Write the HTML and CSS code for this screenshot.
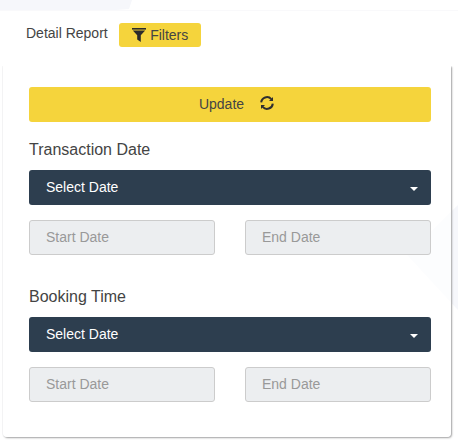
FILE: index.html
```html
<!DOCTYPE html>
<html lang="en">
<head>
  <meta charset="UTF-8" />
  <meta name="viewport" content="width=device-width, initial-scale=1.0"/>
  <title>Detail Report</title>
  <link rel="stylesheet" href="styles.css">
</head>
<body>

  <svg class="bg-shape" width="458" height="447" viewBox="0 0 458 447">
    <polygon points="0,0 132,0 129,9 50,15 0,33" fill="#f6f7fb"/>
    <polygon points="458,205 407,255 458,310" fill="#f6f7fb"/>
  </svg>

  <div class="tabs">
    <span class="tab-title">Detail Report</span>
    <button type="button" class="filter-btn">
      <svg width="14" height="14" viewBox="0 0 14 14" fill="#2b2b2b">
        <path d="M0 0h14v1.6H0z"/>
        <path d="M.8 2.4h12.4L8.8 7.2V14L5.2 11.6V7.2z"/>
      </svg>
      Filters
    </button>
  </div>

  <div class="panel">
    <button type="button" class="update-btn">
      <span class="btn-text">Update</span>
      <svg width="16" height="16" viewBox="0 0 16 16" fill="none" stroke="#2f2f2f" stroke-width="2">
        <path d="M2.2 7.4A5.8 5.8 0 0 1 12.3 4.1"/>
        <path d="M13.8 8.6A5.8 5.8 0 0 1 3.7 11.9"/>
        <path d="M14 2v4h-4z" fill="#2f2f2f" stroke="none"/>
        <path d="M2 14v-4h4z" fill="#2f2f2f" stroke="none"/>
      </svg>
    </button>

    <div class="group">
      <label>Transaction Date</label>
      <div class="select-bar"><span class="btn-text">Select Date</span> <span class="caret"></span></div>
      <div class="date-row">
        <input type="text" placeholder="Start Date" disabled />
        <input type="text" placeholder="End Date" disabled />
      </div>
    </div>

    <div class="group">
      <label>Booking Time</label>
      <div class="select-bar"><span class="btn-text">Select Date</span> <span class="caret"></span></div>
      <div class="date-row">
        <input type="text" placeholder="Start Date" disabled />
        <input type="text" placeholder="End Date" disabled />
      </div>
    </div>
  </div>

</body>
</html>
```

FILE: styles.css
```css
* {
  box-sizing: border-box;
}

body {
  margin: 0;
  padding-top: 10px;
  font-family: "Liberation Sans", Arial, sans-serif;
  background: #fff;
  color: #444;
  position: relative;
  height: 447px;
  overflow: hidden;
}

.bg-shape {
  position: absolute;
  left: 0;
  top: 0;
}

.tabs {
  position: relative;
  z-index: 1;
  height: 56px;
  padding: 12px 0 0 26px;
  border-top: 1px solid #f9f9fb;
  background: #fff;
  display: flex;
  align-items: flex-start;
  gap: 11px;
}

.tab-title {
  margin-top: 1px;
  font-size: 14px;
  line-height: 18px;
}

.filter-btn {
  width: 82px;
  height: 24px;
  padding: 0 0 0 1px;
  border: none;
  border-radius: 3px;
  background: #f5d43c;
  color: #444;
  font-family: inherit;
  font-size: 14px;
  display: flex;
  align-items: center;
  justify-content: center;
  gap: 4px;
}

.panel {
  position: relative;
  width: 448px;
  height: 371px;
  margin-left: 3px;
  padding: 21px 20px 0 26px;
  border-radius: 0 0 4px 4px;
  background: rgba(255, 255, 255, 0.7);
  box-shadow: 1px 1px 2px rgba(0, 0, 0, 0.35), 0 0 0 1px #f7f7f8;
}

.update-btn {
  width: 402px;
  height: 35px;
  padding: 0 0 0 14px;
  border: none;
  border-radius: 3px;
  background: #f5d43c;
  color: #444;
  font-family: inherit;
  font-size: 14px;
  display: flex;
  align-items: center;
  justify-content: center;
  gap: 15px;
}

.update-btn svg {
  margin-top: -3px;
}

.btn-text {
  margin-top: -2px;
}

.group {
  width: 402px;
  margin-top: 19px;
}

.group + .group {
  margin-top: 33px;
}

label {
  display: block;
  font-size: 16px;
  line-height: 18px;
  margin-bottom: 11px;
}

.select-bar {
  height: 35px;
  padding: 0 13px 0 17px;
  border-radius: 3px;
  background: #2d3e4f;
  color: #fff;
  font-size: 14px;
  display: flex;
  align-items: center;
  justify-content: space-between;
}

.caret {
  width: 0;
  height: 0;
  margin-top: 2px;
  border-left: 4px solid transparent;
  border-right: 4px solid transparent;
  border-top: 4px solid #fff;
}

.date-row {
  display: flex;
  justify-content: space-between;
  margin-top: 15px;
}

input {
  width: 186px;
  height: 35px;
  padding: 0 16px 2px;
  border: 1px solid #ccc;
  border-radius: 3px;
  background: #eceef0;
  font-family: inherit;
  font-size: 14px;
}

input::placeholder {
  color: #999;
  opacity: 1;
}
```
